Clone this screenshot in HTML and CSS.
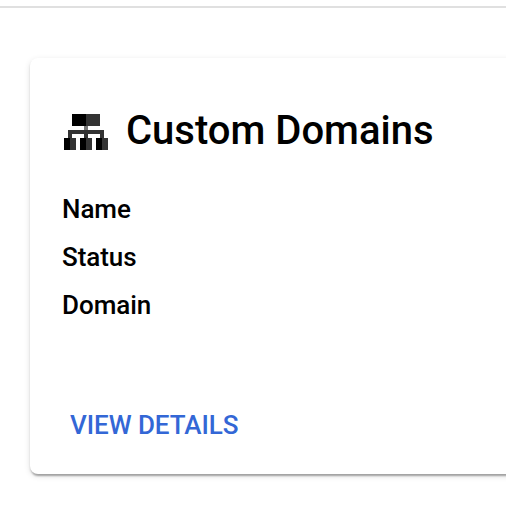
FILE: index.html
```html
<!DOCTYPE html>
<html lang="en">
<head>
    <meta charset="UTF-8">
    <meta name="viewport" content="width=device-width, initial-scale=1.0">
    <title>Custom Domains</title>
    <link rel="stylesheet" href="styles.css">
</head>
<body>
    <div class="toolbar"></div>
    <main class="content">
        <section class="card">
            <div class="card-header">
                <svg class="card-icon" viewBox="0 0 44 36" shape-rendering="crispEdges">
                    <path fill="#777" d="M20 12h4v4h-4z"/>
                    <path fill="#333" d="M4 16h36v8h-4v-4H24v4h-4v-4H8v4H4z"/>
                    <path fill="#000" d="M8 0h14v12H8zM0 24h6v12H0zM16 24h6v12h-6zM32 24h6v12h-6z"/>
                    <path fill="#333" d="M22 0h14v12H22zM6 24h6v12H6zM22 24h6v12h-6zM38 24h6v12h-6z"/>
                </svg>
                <h1>Custom Domains</h1>
            </div>
            <ul class="fields">
                <li>Name</li>
                <li>Status</li>
                <li>Domain</li>
            </ul>
            <a class="details" href="#">VIEW DETAILS</a>
        </section>
    </main>
</body>
</html>
```
FILE: styles.css
```css
* {
    box-sizing: border-box;
    margin: 0;
    padding: 0;
}

body {
    min-height: 100vh;
    font-family: Roboto, sans-serif;
    font-weight: 500;
    color: #000;
    background: #fff;
}

.toolbar {
    height: 8px;
    border-bottom: 2px solid #e0e0e0;
}

.content {
    padding: 50px 0 30px 30px;
    overflow: hidden;
}

.card {
    height: 416px;
    margin-right: -16px; /* runs off the right side */
    padding: 48px 32px 0;
    border-radius: 8px;
    background: #fff;
    box-shadow: 0 4px 2px -2px rgba(0, 0, 0, 0.2),
                0 2px 2px 0 rgba(0, 0, 0, 0.14),
                0 2px 6px 0 rgba(0, 0, 0, 0.12);
}

.card-header {
    display: flex;
    align-items: center;
    height: 48px;
    padding-left: 2px;
}

.card-icon {
    width: 44px;
    height: 36px;
    margin: 4px 18px 0 0;
}

h1 {
    margin-top: 2px;
    font-size: 40px;
    line-height: 48px;
    font-weight: 500;
}

.fields {
    margin-top: 31px;
    list-style: none;
}

.fields li {
    height: 48px;
    font-size: 26px;
    line-height: 48px;
    letter-spacing: -0.05px;
}

.details {
    display: block;
    margin: 72px 0 0 8px;
    font-size: 26px;
    line-height: 48px;
    letter-spacing: -0.05px;
    color: #3367d6;
    text-decoration: none;
}
```
